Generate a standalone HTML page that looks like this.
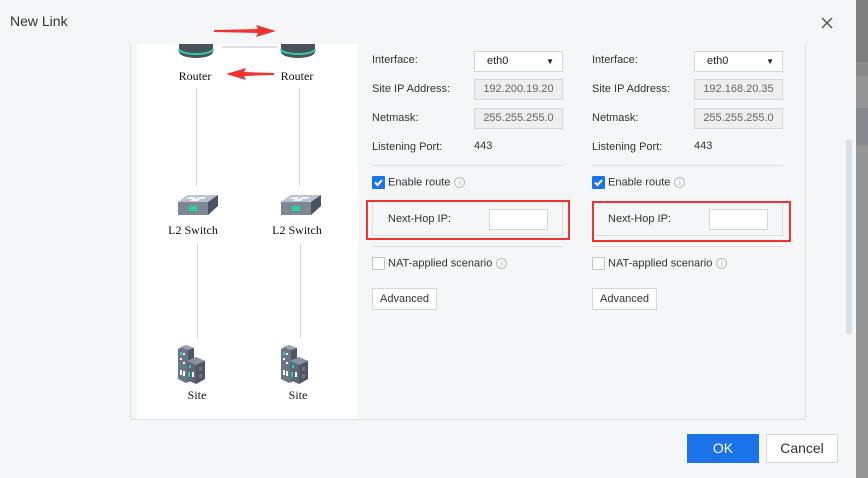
<!DOCTYPE html>
<html><head><style>
*{margin:0;padding:0;box-sizing:border-box}
body{width:868px;height:478px;overflow:hidden;background:#959595;position:relative;font-family:"Liberation Sans",Arial,sans-serif;font-size:11px;color:#333}
.a{position:absolute}
.dlg{left:0;top:0;width:856px;height:478px;background:#f5f6f8}
.lbl{font-size:11px;color:#333;white-space:nowrap}
.inp{border:1px solid #d4d6da;background:#eeeeee;color:#666;font-size:11px;height:21px;line-height:19px;text-align:center}
.sel{border:1px solid #d4d6da;background:#fff;color:#222;font-size:11px;height:21px;line-height:19px;padding-left:12px}
.cb{display:inline-block;vertical-align:middle;width:13px;height:13px;border:1px solid #c4c6ca;background:#fff;margin-right:3px}
.cbon{display:inline-block;vertical-align:middle;width:13px;height:13px;background:#1a73e8;border-radius:1px;margin-right:3px}
.info{display:inline-block;vertical-align:middle;margin-left:4px;width:11px;height:11px;border:1px solid #b8bcc2;border-radius:50%;font-size:8px;color:#b0b4ba;text-align:center;line-height:9px;font-family:"Liberation Serif",serif}
.btn{border:1px solid #d4d6da;background:#fff;font-size:11px;color:#333;text-align:center}
.red{border:2px solid #ee3333}
.dl{font-family:"Liberation Serif",serif;font-size:12px;color:#111;text-align:center;width:80px}
.vl{width:1px;background:#d6d8dc}
</style></head><body>
<div class="a" style="left:856px;top:0;width:12px;height:62px;background:#7f7f7f"></div>
<div class="a" style="left:856px;top:62px;width:12px;height:14px;background:#8a8a8a"></div>
<div class="a" style="left:856px;top:108px;width:12px;height:37px;background:#868a8e"></div>
<div class="a dlg"></div>
<div class="a" style="left:10px;top:13px;font-size:14px;color:#333">New Link</div>
<svg class="a" style="left:821px;top:17px" width="12" height="12"><path d="M1 1L11 11M11 1L1 11" stroke="#555" stroke-width="1.5"/></svg>
<!-- panel -->
<div class="a" style="left:130px;top:44px;width:676px;height:376px;border:1px solid #dcdee2;border-top:none;background:#f5f6f8"></div>
<div class="a" style="left:137px;top:44px;width:221px;height:375px;background:#fff"></div>
<div class="a" style="left:222px;top:46px;width:55px;height:2px;background:#dcdee2"></div>
<!-- routers -->
<svg class="a" style="left:178px;top:44px" width="36" height="16"><path d="M1 0v8a17 6 0 0 0 34 0V0z" fill="#4a5260"/><path d="M1 5a17 5 0 0 0 34 0" stroke="#2bd39a" stroke-width="2" fill="none"/></svg>
<svg class="a" style="left:280px;top:44px" width="36" height="16"><path d="M1 0v8a17 6 0 0 0 34 0V0z" fill="#4a5260"/><path d="M1 5a17 5 0 0 0 34 0" stroke="#2bd39a" stroke-width="2" fill="none"/></svg>
<div class="a dl" style="left:155px;top:69px">Router</div>
<div class="a dl" style="left:257px;top:69px">Router</div>
<!-- arrows -->
<svg class="a" style="left:212px;top:24px" width="66" height="14"><path d="M2 6L46 5L44 1L64 7L44 13L46 9L2 8z" fill="#ee3333"/></svg>
<svg class="a" style="left:224px;top:66px" width="52" height="16"><path d="M50 7L20 6L22 2L2 8L22 14L20 10L50 9z" fill="#ee3333"/></svg>
<div class="a vl" style="left:196px;top:88px;height:98px"></div>
<div class="a vl" style="left:299px;top:88px;height:98px"></div>
<!-- switches -->
<svg class="a" style="left:177px;top:193px" width="42" height="24"><path d="M1 9L11 2H41V13L31 22H1z" fill="#4a5260"/><path d="M1 9L11 2H41L31 9z" fill="#b8c2d0"/><path d="M12 4h8l-3 2h-8zM22 4h8l-3 2h-8zM15 6h8l-2 2h-8z" fill="#fff" opacity=".8"/><path d="M31 9H1V22H31z" fill="#7d8796"/><rect x="12" y="13" width="8" height="5" fill="#2bd39a"/></svg>
<svg class="a" style="left:280px;top:193px" width="42" height="24"><path d="M1 9L11 2H41V13L31 22H1z" fill="#4a5260"/><path d="M1 9L11 2H41L31 9z" fill="#b8c2d0"/><path d="M12 4h8l-3 2h-8zM22 4h8l-3 2h-8zM15 6h8l-2 2h-8z" fill="#fff" opacity=".8"/><path d="M31 9H1V22H31z" fill="#7d8796"/><rect x="12" y="13" width="8" height="5" fill="#2bd39a"/></svg>
<div class="a dl" style="left:153px;top:223px">L2 Switch</div>
<div class="a dl" style="left:257px;top:223px">L2 Switch</div>
<div class="a vl" style="left:197px;top:243px;height:95px"></div>
<div class="a vl" style="left:300px;top:243px;height:95px"></div>
<!-- sites -->
<svg class="a" style="left:178px;top:345px" width="28" height="40"><path d="M0 4L8 0L16 3V35L8 38L0 34z" fill="#6c7585"/><path d="M8 0L16 3L10 5L2 2z" fill="#9aa2b0"/><path d="M10 5V36L16 35V3z" fill="#4e5666"/><path d="M9 16L18 12L27 16V34L18 39L9 35z" fill="#5d6676"/><path d="M9 16L18 12L27 16L18 20z" fill="#8a93a3"/><path d="M18 20L27 16V34L18 39z" fill="#4e5666"/><rect x="2" y="7" width="2" height="3" fill="#2bd39a"/><rect x="5" y="8" width="2" height="2" fill="#fff"/><rect x="2" y="13" width="2" height="2" fill="#fff"/><rect x="5" y="17" width="2" height="2" fill="#fff"/><rect x="11" y="20" width="2" height="3" fill="#2bd39a"/><rect x="2" y="25" width="2" height="5" fill="#fff"/><rect x="5" y="26" width="2" height="5" fill="#fff"/><rect x="10" y="27" width="2" height="5" fill="#2bd39a"/><rect x="14" y="27" width="2" height="5" fill="#fff"/><rect x="21" y="22" width="3" height="4" fill="#6c7585"/><rect x="21" y="29" width="3" height="4" fill="#6c7585"/></svg>
<svg class="a" style="left:281px;top:345px" width="28" height="40"><path d="M0 4L8 0L16 3V35L8 38L0 34z" fill="#6c7585"/><path d="M8 0L16 3L10 5L2 2z" fill="#9aa2b0"/><path d="M10 5V36L16 35V3z" fill="#4e5666"/><path d="M9 16L18 12L27 16V34L18 39L9 35z" fill="#5d6676"/><path d="M9 16L18 12L27 16L18 20z" fill="#8a93a3"/><path d="M18 20L27 16V34L18 39z" fill="#4e5666"/><rect x="2" y="7" width="2" height="3" fill="#2bd39a"/><rect x="5" y="8" width="2" height="2" fill="#fff"/><rect x="2" y="13" width="2" height="2" fill="#fff"/><rect x="5" y="17" width="2" height="2" fill="#fff"/><rect x="11" y="20" width="2" height="3" fill="#2bd39a"/><rect x="2" y="25" width="2" height="5" fill="#fff"/><rect x="5" y="26" width="2" height="5" fill="#fff"/><rect x="10" y="27" width="2" height="5" fill="#2bd39a"/><rect x="14" y="27" width="2" height="5" fill="#fff"/><rect x="21" y="22" width="3" height="4" fill="#6c7585"/><rect x="21" y="29" width="3" height="4" fill="#6c7585"/></svg>
<div class="a dl" style="left:157px;top:388px">Site</div>
<div class="a dl" style="left:258px;top:388px">Site</div>

<!-- column 1 -->
<div class="a lbl" style="left:372px;top:54px">Interface:</div>
<div class="a sel" style="left:474px;top:51px;width:89px">eth0<span style="position:absolute;right:8px;top:0;font-size:8px">▼</span></div>
<div class="a lbl" style="left:372px;top:83px">Site IP Address:</div>
<div class="a inp" style="left:474px;top:79px;width:89px">192.200.19.20</div>
<div class="a lbl" style="left:372px;top:112px">Netmask:</div>
<div class="a inp" style="left:474px;top:108px;width:89px">255.255.255.0</div>
<div class="a lbl" style="left:372px;top:141px">Listening Port:</div>
<div class="a lbl" style="left:474px;top:140px">443</div>
<div class="a" style="left:372px;top:165px;width:191px;height:1px;background:#dcdee2"></div>
<div class="a lbl" style="left:372px;top:176px"><span class="cbon"><svg width="13" height="13"><path d="M3 6.5L5.5 9L10 4" stroke="#fff" stroke-width="2" fill="none"/></svg></span>Enable route<span class="info">i</span></div>
<div class="a" style="left:372px;top:200px;width:191px;height:36px;border:1px solid #dcdee2;border-top:none"></div>
<div class="a red" style="left:366px;top:200px;width:204px;height:40px"></div>
<div class="a lbl" style="left:388px;top:213px">Next-Hop IP:</div>
<div class="a" style="left:489px;top:209px;width:59px;height:21px;border:1px solid #d4d6da;background:#fff"></div>
<div class="a" style="left:372px;top:246px;width:191px;height:1px;background:#dcdee2"></div>
<div class="a lbl" style="left:372px;top:257px"><span class="cb"></span>NAT-applied scenario<span class="info">i</span></div>
<div class="a btn" style="left:372px;top:288px;width:65px;height:22px;line-height:20px">Advanced</div>

<!-- column 2 -->
<div class="a lbl" style="left:592px;top:54px">Interface:</div>
<div class="a sel" style="left:694px;top:51px;width:89px">eth0<span style="position:absolute;right:8px;top:0;font-size:8px">▼</span></div>
<div class="a lbl" style="left:592px;top:83px">Site IP Address:</div>
<div class="a inp" style="left:694px;top:79px;width:89px">192.168.20.35</div>
<div class="a lbl" style="left:592px;top:112px">Netmask:</div>
<div class="a inp" style="left:694px;top:108px;width:89px">255.255.255.0</div>
<div class="a lbl" style="left:592px;top:141px">Listening Port:</div>
<div class="a lbl" style="left:694px;top:140px">443</div>
<div class="a" style="left:592px;top:165px;width:191px;height:1px;background:#dcdee2"></div>
<div class="a lbl" style="left:592px;top:176px"><span class="cbon"><svg width="13" height="13"><path d="M3 6.5L5.5 9L10 4" stroke="#fff" stroke-width="2" fill="none"/></svg></span>Enable route<span class="info">i</span></div>
<div class="a" style="left:592px;top:200px;width:191px;height:36px;border:1px solid #dcdee2;border-top:none"></div>
<div class="a red" style="left:592px;top:201px;width:199px;height:41px"></div>
<div class="a lbl" style="left:608px;top:213px">Next-Hop IP:</div>
<div class="a" style="left:709px;top:209px;width:59px;height:21px;border:1px solid #d4d6da;background:#fff"></div>
<div class="a" style="left:592px;top:246px;width:191px;height:1px;background:#dcdee2"></div>
<div class="a lbl" style="left:592px;top:257px"><span class="cb"></span>NAT-applied scenario<span class="info">i</span></div>
<div class="a btn" style="left:592px;top:288px;width:65px;height:22px;line-height:20px">Advanced</div>

<!-- scrollbar -->
<div class="a" style="left:846px;top:139px;width:6px;height:196px;background:#dcdfe5;border-radius:3px"></div>
<!-- footer -->
<div class="a" style="left:687px;top:434px;width:72px;height:29px;background:#1a73e8;color:#fff;font-size:14px;text-align:center;line-height:29px">OK</div>
<div class="a btn" style="left:766px;top:434px;width:72px;height:29px;line-height:27px;font-size:14px">Cancel</div>
</body></html>
